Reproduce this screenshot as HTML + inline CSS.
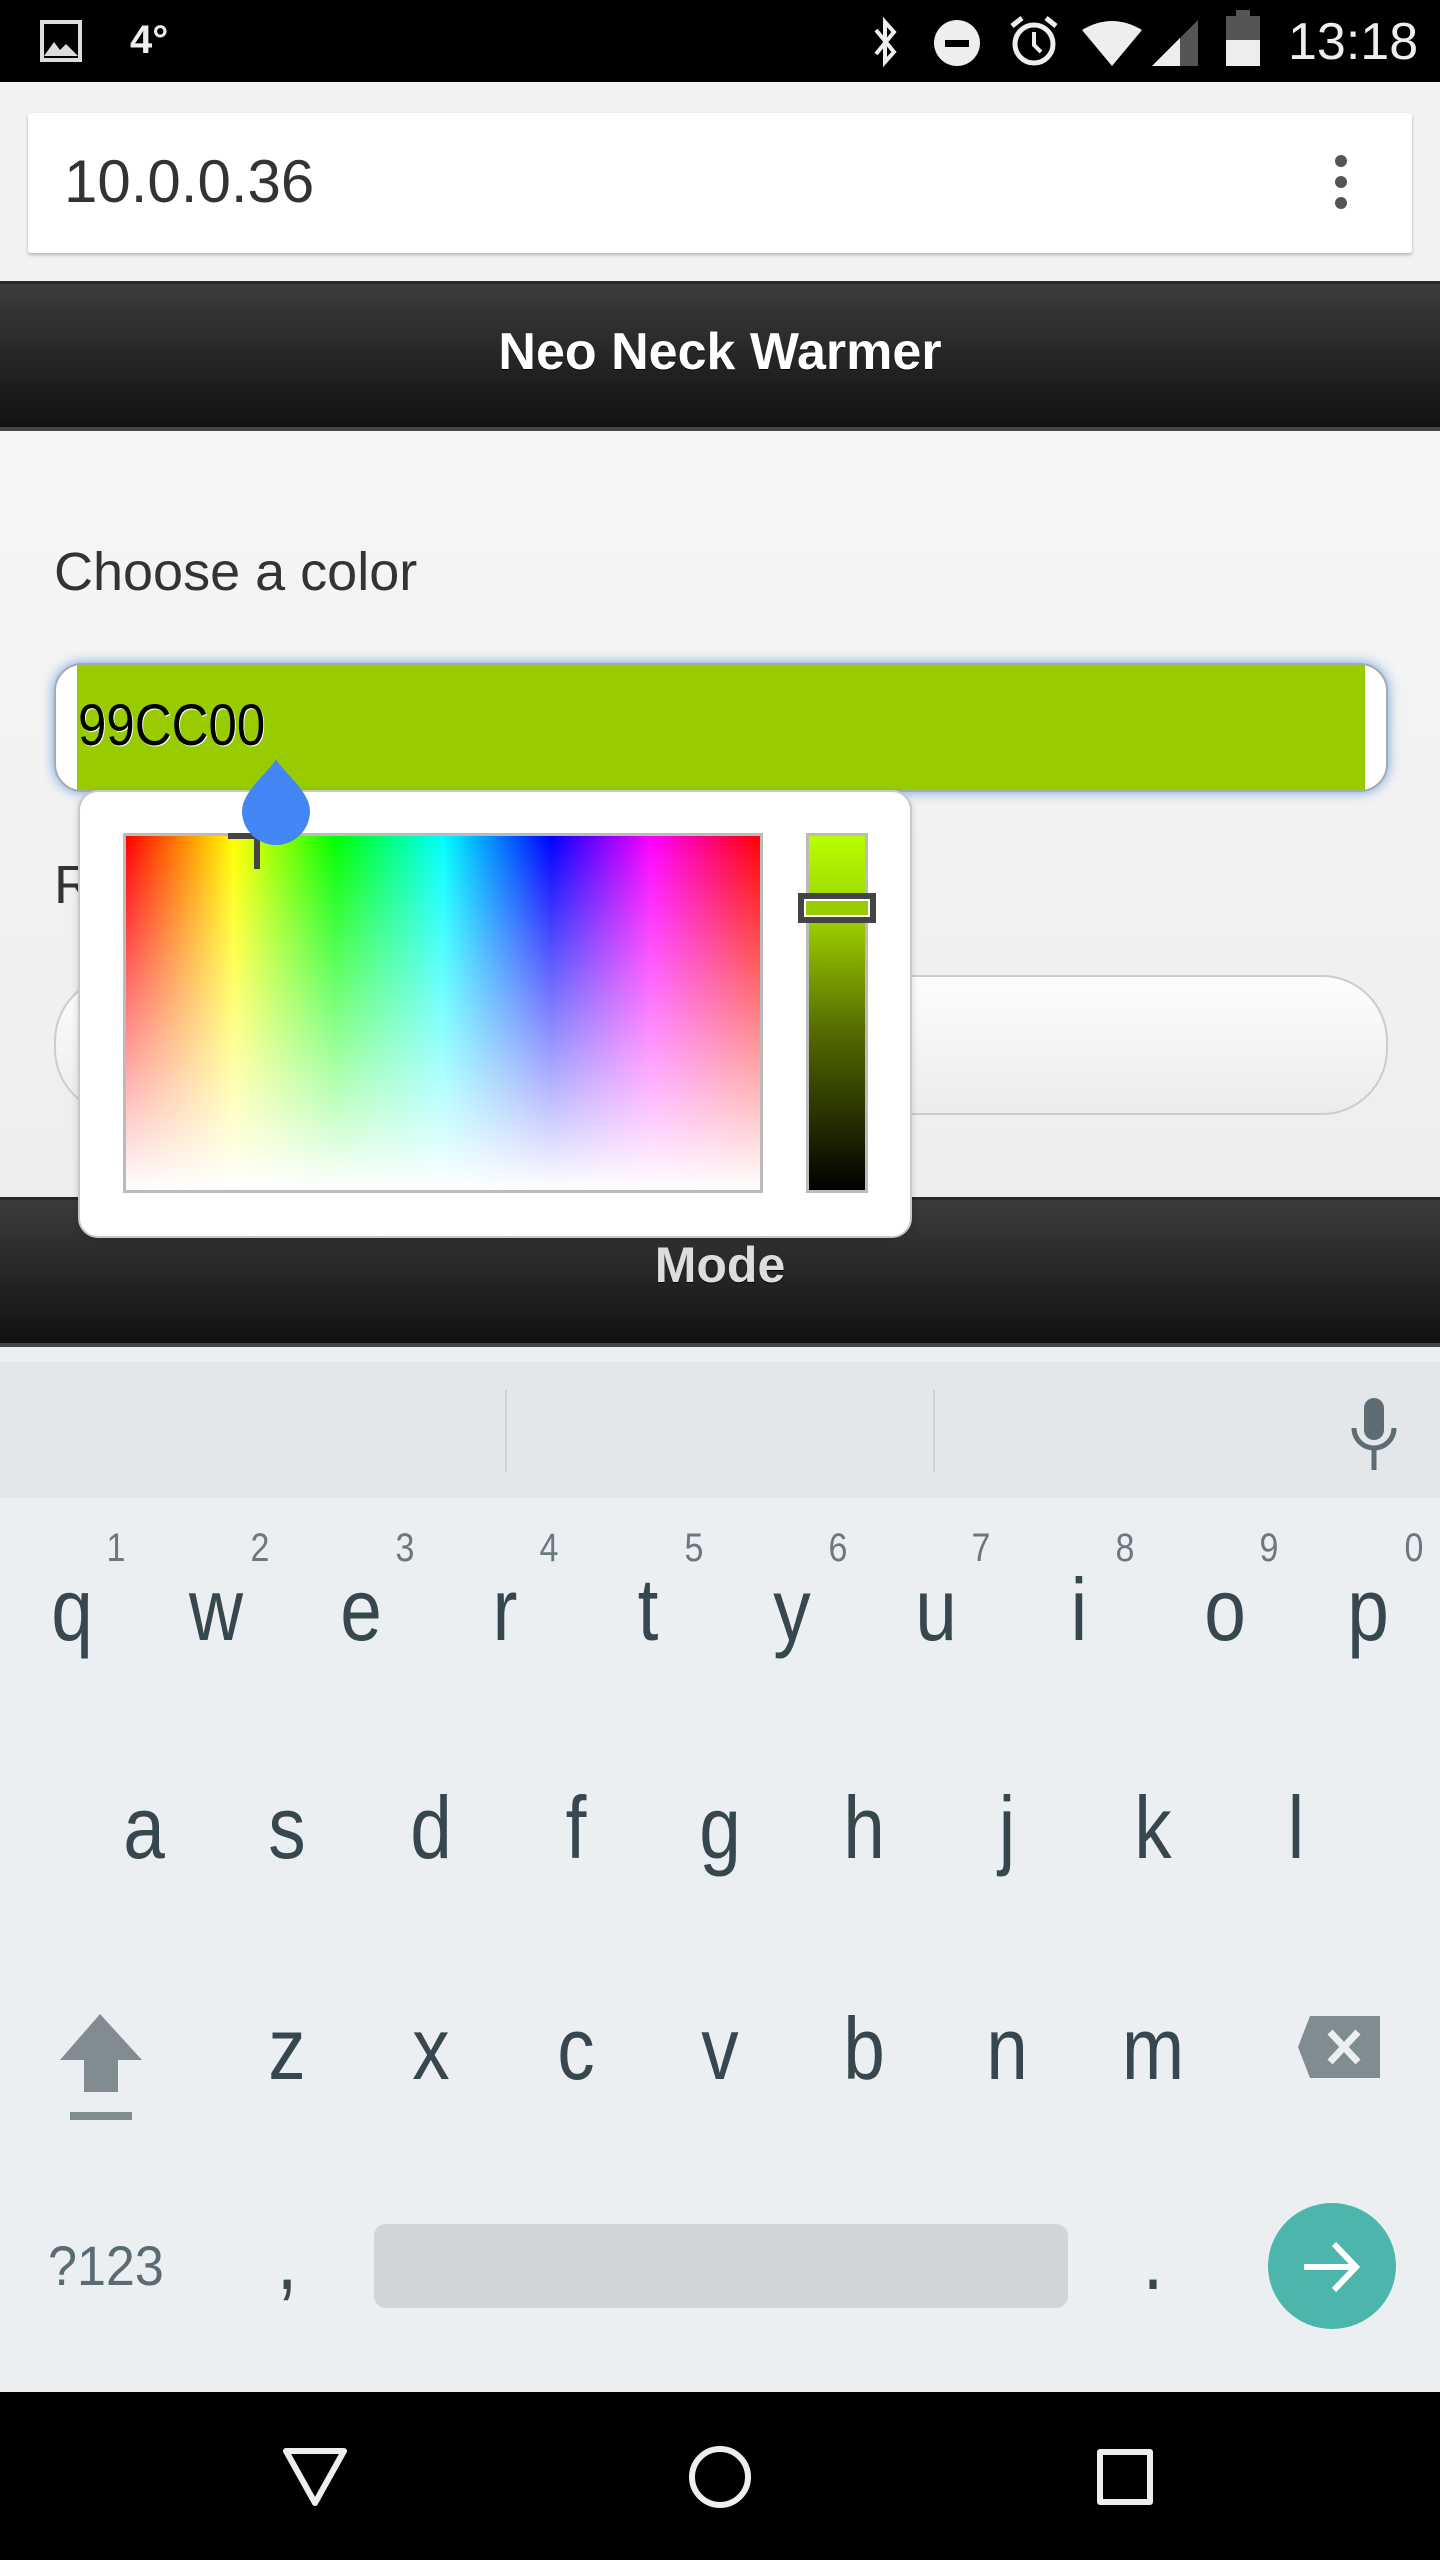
<!DOCTYPE html>
<html><head><meta charset="utf-8"><style>
*{margin:0;padding:0;box-sizing:border-box}
body{width:1440px;height:2560px;position:relative;overflow:hidden;background:#f2f2f2;font-family:"Liberation Sans",sans-serif}
.a{position:absolute}
.k{position:absolute;width:140px;text-align:center;font-size:88px;line-height:1;color:#37474f;transform:scaleX(.85)}
.n{position:absolute;width:60px;text-align:center;font-size:40px;line-height:1;color:#6b7880;transform:scaleX(.85)}
</style></head><body>
<!-- status bar -->
<div class="a" style="left:0;top:0;width:1440px;height:82px;background:#000"></div>
<svg class="a" style="left:40px;top:20px" width="44" height="42"><rect x="2" y="2" width="38" height="38" fill="none" stroke="#ddd" stroke-width="4"/><path d="M4 36 L14 22 L20 30 L26 24 L38 36Z" fill="#ddd"/></svg>
<div class="a" style="left:130px;top:20px;color:#eee;font-size:40px;line-height:1;font-weight:bold">4°</div>
<svg class="a" style="left:870px;top:16px" width="30" height="52"><path d="M6 14 L24 36 L15 46 L15 6 L24 16 L6 38" fill="none" stroke="#eee" stroke-width="4"/></svg>
<div class="a" style="left:934px;top:20px;width:46px;height:46px;border-radius:50%;background:#eee"></div>
<div class="a" style="left:945px;top:40px;width:24px;height:7px;background:#000"></div>
<svg class="a" style="left:1008px;top:14px" width="52" height="56"><circle cx="26" cy="30" r="19" fill="none" stroke="#eee" stroke-width="5"/><path d="M26 18 V31 L33 38" fill="none" stroke="#eee" stroke-width="4"/><path d="M4 12 L14 4 M48 12 L38 4" stroke="#eee" stroke-width="5"/></svg>
<svg class="a" style="left:1080px;top:18px" width="122" height="50"><path d="M2 12 Q32 -6 62 12 L32 48Z" fill="#eee"/><path d="M72 48 L118 2 L118 48Z" fill="#555"/><path d="M72 48 L100 20 L100 48Z" fill="#eee"/></svg>
<div class="a" style="left:1226px;top:16px;width:34px;height:50px;background:#555"></div>
<div class="a" style="left:1236px;top:10px;width:14px;height:8px;background:#555"></div>
<div class="a" style="left:1226px;top:40px;width:34px;height:26px;background:#eee"></div>
<div class="a" style="left:1288px;top:16px;color:#eee;font-size:52px;line-height:1">13:18</div>
<!-- url bar -->
<div class="a" style="left:28px;top:113px;width:1384px;height:140px;background:#fff;border-radius:3px;box-shadow:0 2px 3px rgba(0,0,0,.25)"></div>
<div class="a" style="left:64px;top:152px;font-size:60px;line-height:1;color:#333">10.0.0.36</div>
<div class="a" style="left:1335px;top:155px;width:12px;height:12px;border-radius:50%;background:#555"></div>
<div class="a" style="left:1335px;top:176px;width:12px;height:12px;border-radius:50%;background:#555"></div>
<div class="a" style="left:1335px;top:197px;width:12px;height:12px;border-radius:50%;background:#555"></div>
<!-- header -->
<div class="a" style="left:0;top:281px;width:1440px;height:150px;background:linear-gradient(#3c3c3c,#111);border-top:3px solid #2a2a2a;border-bottom:4px solid #444"></div>
<div class="a" style="left:0;top:326px;width:1440px;text-align:center;color:#fff;font-weight:bold;font-size:52px;line-height:1;text-shadow:0 1px 0 #000">Neo Neck Warmer</div>
<!-- content -->
<div class="a" style="left:0;top:431px;width:1440px;height:766px;background:linear-gradient(#f6f6f6,#eeeeee)"></div>
<div class="a" style="left:54px;top:545px;font-size:54px;line-height:1;color:#333">Choose a color</div>
<div class="a" style="left:54px;top:663px;width:1334px;height:129px;border-radius:28px;background:#fff;border:2px solid #aaa;box-shadow:0 0 12px #6aa0e0"></div>
<div class="a" style="left:77px;top:665px;width:1288px;height:125px;background:#99cc00"></div>
<div class="a" style="left:78px;top:697px;font-size:58px;line-height:1;color:#000;text-shadow:1px 1px 0 #fff;transform:scaleX(.88);transform-origin:left">99CC00</div>
<div class="a" style="left:54px;top:858px;font-size:54px;line-height:1;color:#333">R</div>
<div class="a" style="left:54px;top:975px;width:1334px;height:140px;border-radius:66px;background:linear-gradient(#fdfdfd,#ececec);border:2px solid #ccc"></div>
<!-- mode -->
<div class="a" style="left:0;top:1197px;width:1440px;height:150px;background:linear-gradient(#3c3c3c,#111);border-top:3px solid #2a2a2a;border-bottom:4px solid #444"></div>
<div class="a" style="left:0;top:1240px;width:1440px;text-align:center;color:#ddd;font-weight:bold;font-size:50px;line-height:1;text-shadow:0 1px 0 #000">Mode</div>
<!-- picker -->
<div class="a" style="left:78px;top:790px;width:834px;height:448px;background:#fff;border:2px solid #c8c8c8;border-radius:20px;box-shadow:0 2px 8px rgba(0,0,0,.15)"></div>
<div class="a" style="left:123px;top:833px;width:640px;height:360px;border:3px solid #bbb;background:linear-gradient(transparent,#fff),linear-gradient(90deg,#f00,#ff0 17%,#0f0 33%,#0ff 50%,#00f 67%,#f0f 83%,#f00)"></div>
<div class="a" style="left:806px;top:833px;width:62px;height:360px;border:3px solid #bbb;background:linear-gradient(#b8ff00,#99cc00 25%,#556b00 55%,#000)"></div>
<div class="a" style="left:798px;top:893px;width:78px;height:30px;border:6px solid #444;background:#99cc00;box-shadow:inset 0 0 0 2px #fff"></div>
<div class="a" style="left:228px;top:833px;width:30px;height:6px;background:#444"></div>
<div class="a" style="left:254px;top:833px;width:6px;height:36px;background:#444"></div>
<svg class="a" style="left:240px;top:757px" width="72" height="90"><path d="M36 2 C30 14 2 34 2 54 A34 34 0 0 0 70 54 C70 34 42 14 36 2Z" fill="#4287f5"/></svg>
<!-- keyboard -->
<div class="a" style="left:0;top:1347px;width:1440px;height:1045px;background:#eceff1"></div>
<div class="a" style="left:0;top:1362px;width:1440px;height:136px;background:#e3e7ea"></div>
<div class="a" style="left:505px;top:1390px;width:2px;height:82px;background:#cfd3d6"></div>
<div class="a" style="left:933px;top:1390px;width:2px;height:82px;background:#cfd3d6"></div>
<svg class="a" style="left:1346px;top:1394px" width="56" height="80"><rect x="18" y="4" width="20" height="42" rx="10" fill="#5f6b72"/><path d="M8 34 A20 20 0 0 0 48 34" fill="none" stroke="#5f6b72" stroke-width="5"/><path d="M28 54 V76" stroke="#5f6b72" stroke-width="5"/></svg>
<div class="n" style="left:86px;top:1528px">1</div><div class="n" style="left:230px;top:1528px">2</div><div class="n" style="left:375px;top:1528px">3</div><div class="n" style="left:519px;top:1528px">4</div><div class="n" style="left:664px;top:1528px">5</div><div class="n" style="left:808px;top:1528px">6</div><div class="n" style="left:951px;top:1528px">7</div><div class="n" style="left:1095px;top:1528px">8</div><div class="n" style="left:1239px;top:1528px">9</div><div class="n" style="left:1384px;top:1528px">0</div>
<div class="k" style="left:2px;top:1566px">q</div><div class="k" style="left:146px;top:1566px">w</div><div class="k" style="left:291px;top:1566px">e</div><div class="k" style="left:435px;top:1566px">r</div><div class="k" style="left:578px;top:1566px">t</div><div class="k" style="left:722px;top:1566px">y</div><div class="k" style="left:866px;top:1566px">u</div><div class="k" style="left:1009px;top:1566px">i</div><div class="k" style="left:1155px;top:1566px">o</div><div class="k" style="left:1298px;top:1566px">p</div>
<div class="k" style="left:74px;top:1784px">a</div><div class="k" style="left:217px;top:1784px">s</div><div class="k" style="left:361px;top:1784px">d</div><div class="k" style="left:506px;top:1784px">f</div><div class="k" style="left:650px;top:1784px">g</div><div class="k" style="left:794px;top:1784px">h</div><div class="k" style="left:937px;top:1784px">j</div><div class="k" style="left:1083px;top:1784px">k</div><div class="k" style="left:1226px;top:1784px">l</div>
<div class="k" style="left:217px;top:2005px">z</div><div class="k" style="left:361px;top:2005px">x</div><div class="k" style="left:506px;top:2005px">c</div><div class="k" style="left:650px;top:2005px">v</div><div class="k" style="left:794px;top:2005px">b</div><div class="k" style="left:937px;top:2005px">n</div><div class="k" style="left:1083px;top:2005px">m</div>
<svg class="a" style="left:58px;top:2012px" width="86" height="110"><path d="M42 2 L84 48 L60 48 L60 80 L26 80 L26 48 L2 48Z" fill="#818c91"/><rect x="12" y="100" width="62" height="8" fill="#818c91"/></svg>
<svg class="a" style="left:1296px;top:2014px" width="86" height="66"><path d="M14 2 H84 V64 H14 L2 33Z" fill="#818c91"/><path d="M34 18 L62 48 M62 18 L34 48" stroke="#eceff1" stroke-width="7"/></svg>
<div class="a" style="left:48px;top:2238px;font-size:56px;line-height:1;color:#5b6b73;transform:scaleX(.93);transform-origin:left">?123</div>
<div class="k" style="left:217px;top:2215px">,</div>
<div class="k" style="left:1083px;top:2215px">.</div>
<div class="a" style="left:374px;top:2224px;width:694px;height:84px;border-radius:12px;background:#d0d5d9"></div>
<div class="a" style="left:1268px;top:2203px;width:128px;height:126px;border-radius:50%;background:#4db6ac"></div>
<svg class="a" style="left:1300px;top:2236px" width="64" height="62"><path d="M4 31 H56 M34 8 L56 31 L34 54" fill="none" stroke="#fff" stroke-width="6"/></svg>
<!-- nav -->
<div class="a" style="left:0;top:2392px;width:1440px;height:168px;background:#000"></div>
<svg class="a" style="left:282px;top:2447px" width="66" height="60"><path d="M4 4 H62 L33 56Z" fill="none" stroke="#eee" stroke-width="6" stroke-linejoin="round"/></svg>
<div class="a" style="left:689px;top:2446px;width:62px;height:62px;border-radius:50%;border:6px solid #eee"></div>
<div class="a" style="left:1097px;top:2449px;width:56px;height:56px;border-radius:3px;border:6px solid #eee"></div>
</body></html>
